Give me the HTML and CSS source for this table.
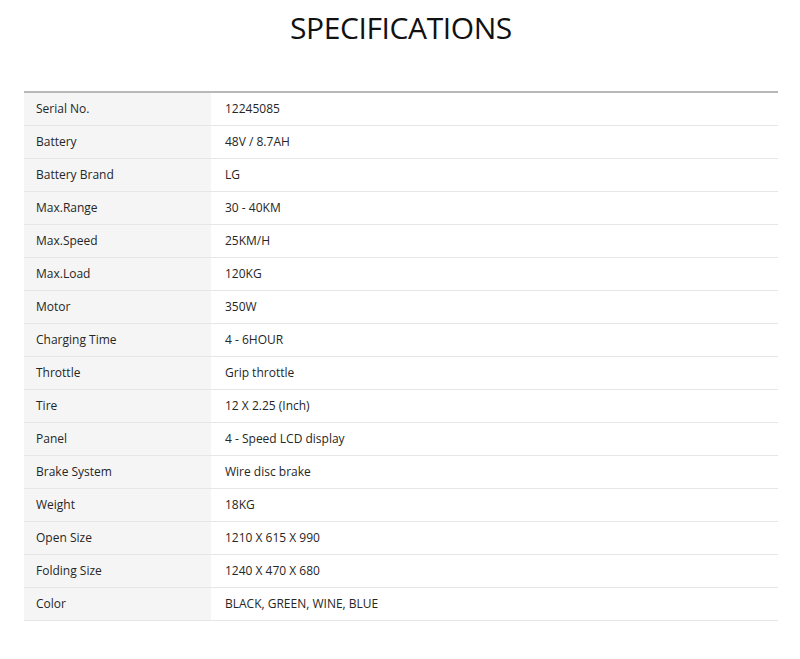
FILE: index.html
```html
<!DOCTYPE html>
<html>
<head>
<meta charset="utf-8">
<link rel="stylesheet" href="styles.css">
</head>
<body>
<div class="page">
  <h1 class="title">SPECIFICATIONS</h1>
  <table class="spec">
    <tbody>
      <tr><td class="k">Serial No.</td><td class="v">12245085</td></tr>
      <tr><td class="k">Battery</td><td class="v">48V / 8.7AH</td></tr>
      <tr><td class="k">Battery Brand</td><td class="v">LG</td></tr>
      <tr><td class="k">Max.Range</td><td class="v">30 - 40KM</td></tr>
      <tr><td class="k">Max.Speed</td><td class="v">25KM/H</td></tr>
      <tr><td class="k">Max.Load</td><td class="v">120KG</td></tr>
      <tr><td class="k">Motor</td><td class="v">350W</td></tr>
      <tr><td class="k">Charging Time</td><td class="v">4 - 6HOUR</td></tr>
      <tr><td class="k">Throttle</td><td class="v">Grip throttle</td></tr>
      <tr><td class="k">Tire</td><td class="v">12 X 2.25 (Inch)</td></tr>
      <tr><td class="k">Panel</td><td class="v">4 - Speed LCD display</td></tr>
      <tr><td class="k">Brake System</td><td class="v">Wire disc brake</td></tr>
      <tr><td class="k">Weight</td><td class="v">18KG</td></tr>
      <tr><td class="k">Open Size</td><td class="v">1210 X 615 X 990</td></tr>
      <tr><td class="k">Folding Size</td><td class="v">1240 X 470 X 680</td></tr>
      <tr><td class="k">Color</td><td class="v">BLACK, GREEN, WINE, BLUE</td></tr>
    </tbody>
  </table>
</div>
</body>
</html>
```
FILE: styles.css
```css
html, body {
  margin: 0;
  padding: 0;
  background: #fff;
}
body {
  font-family: "Open Sans", "Liberation Sans", sans-serif;
  color: #262626;
}
.page {
  padding: 0 22px 0 24px;
}
.title {
  margin: 0;
  height: 91px;
  padding-top: 9px;
  box-sizing: border-box;
  text-align: center;
  font-weight: 400;
  font-size: 30px;
  line-height: 38px;
  color: #111;
  letter-spacing: -0.4px;
}
.spec {
  width: 100%;
  border-collapse: collapse;
  border-top: 2px solid #b8b8b8;
  font-size: 12px;
}
.spec td {
  padding: 8px 12px;
  line-height: 16px;
  border-bottom: 1px solid #e6e6e6;
  vertical-align: middle;
}
.spec .k {
  width: 187px;
  background: #f5f5f5;
  box-sizing: border-box;
}
.spec .v {
  padding-left: 14px;
}
```
